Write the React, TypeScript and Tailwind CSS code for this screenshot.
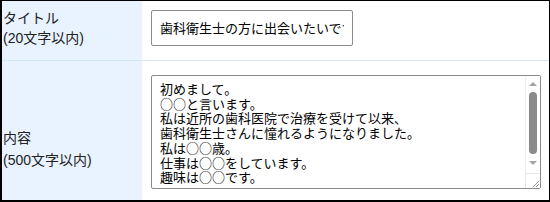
import { useState } from 'react'

const labelFont = { fontFamily: '"Liberation Sans", "Noto Sans CJK JP", sans-serif' }
const fieldFont = { fontFamily: '"Noto Sans CJK JP", "Noto Sans", sans-serif' }

export default function App() {
  const [title, setTitle] = useState('歯科衛生士の方に出会いたいです')
  const [body, setBody] = useState(
    '初めまして。\n○○と言います。\n私は近所の歯科医院で治療を受けて以来、\n歯科衛生士さんに憧れるようになりました。\n私は○○歳。\n仕事は○○をしています。\n趣味は○○です。'
  )

  return (
    <div className="w-[550px] h-[202px] border-t border-r border-l-2 border-b-2 border-black bg-white flex flex-col text-[#222]">
      {/* タイトル */}
      <div className="flex h-[60px] border-b border-[#d3e7f8]">
        <div className="w-[140px] bg-[#e8f3ff] pl-[1px] pt-[7px] text-[14px] leading-[20px]" style={labelFont}>
          <div>タイトル</div>
          <div>(20文字以内)</div>
        </div>
        <div className="flex-1 pl-[9px] pt-[9px]">
          <input
            value={title}
            onChange={(e) => setTitle(e.target.value)}
            className="w-[202px] h-[36px] border border-[#8a8a8a] rounded-[2px] px-[8px] pb-[2px] text-[13px] text-black outline-none"
            style={fieldFont}
          />
        </div>
      </div>

      {/* 内容 */}
      <div className="flex flex-1">
        <div className="w-[140px] bg-[#e8f3ff] pl-[1px] pt-[66px] text-[14px] leading-[22px]" style={labelFont}>
          <div>内容</div>
          <div>(500文字以内)</div>
        </div>
        <div className="flex-1 pl-[9px] pt-[14px]">
          <div className="relative w-[390px] h-[114px]">
            <textarea
              value={body}
              onChange={(e) => setBody(e.target.value)}
              className="block w-full h-full border border-[#8a8a8a] rounded-[2px] pl-[8px] pr-[24px] pt-[6px] text-[13px] leading-[14.7px] text-black outline-none resize-none overflow-hidden"
              style={fieldFont}
            />
            {/* scrollbar */}
            <div className="absolute top-[1px] right-[1px] bottom-[1px] w-[15px] flex flex-col items-center bg-white border-l border-[#eeeeee]">
              <div className="h-[16px] flex items-center justify-center">
                <div className="w-0 h-0 border-l-[4px] border-r-[4px] border-b-[4px] border-l-transparent border-r-transparent border-b-[#a3a3a3]" />
              </div>
              <div className="w-[8px] h-[62px] rounded-full bg-[#8b8b8b]" />
              <div className="h-[18px] flex items-center justify-center">
                <div className="w-0 h-0 border-l-[4px] border-r-[4px] border-t-[4px] border-l-transparent border-r-transparent border-t-[#a3a3a3]" />
              </div>
              <div className="mt-auto w-[15px] h-[15px] -ml-px border-t border-l border-[#e6e6e6] bg-white flex items-end justify-end">
                <svg width="10" height="10" viewBox="0 0 10 10">
                  <line x1="9" y1="3" x2="3" y2="9" stroke="#9a9a9a" strokeWidth="1" />
                  <line x1="9" y1="6" x2="6" y2="9" stroke="#9a9a9a" strokeWidth="1" />
                </svg>
              </div>
            </div>
          </div>
        </div>
      </div>
    </div>
  )
}
